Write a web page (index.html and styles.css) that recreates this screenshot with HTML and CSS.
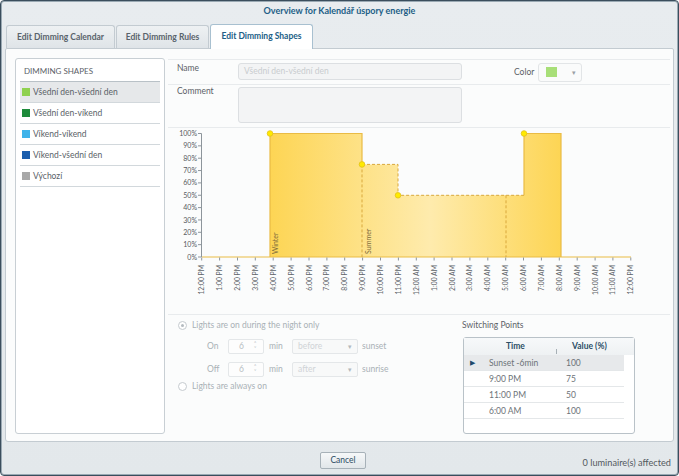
FILE: index.html
```html
<!DOCTYPE html>
<html>
<head>
<meta charset="utf-8">
<link rel="stylesheet" href="styles.css">
</head>
<body>
<div class="window">
  <div class="title">Overview for Kalendář úspory energie</div>
  <div class="tabs">
    <div class="tab t1">Edit Dimming Calendar</div>
    <div class="tab t2">Edit Dimming Rules</div>
    <div class="tab t3 active">Edit Dimming Shapes</div>
  </div>
  <div class="panel">
    <div class="list">
      <div class="list-head">DIMMING SHAPES</div>
      <div class="item selected"><span class="sq c1"></span>Všední den-všední den</div>
      <div class="item"><span class="sq c2"></span>Všední den-víkend</div>
      <div class="item"><span class="sq c3"></span>Víkend-víkend</div>
      <div class="item"><span class="sq c4"></span>Víkend-všední den</div>
      <div class="item"><span class="sq c5"></span>Výchozí</div>
    </div>
    <div class="main">
      <div class="row-name">
        <div class="lbl name-lbl">Name</div>
        <div class="input">Všední den-všední den</div>
        <div class="color-lbl">Color</div>
        <div class="color-dd"><span class="swatch"></span><span class="caret">▾</span></div>
      </div>
      <div class="row-comment">
        <div class="lbl comment-lbl">Comment</div>
        <div class="textarea"></div>
      </div>
      <div class="chart">
        <svg width="502" height="186" viewBox="168 126 502 186" xmlns="http://www.w3.org/2000/svg">
          <defs>
            <linearGradient id="fillg" gradientUnits="userSpaceOnUse" x1="270" y1="0" x2="561" y2="0">
              <stop offset="0" stop-color="#fdd554"/>
              <stop offset="0.55" stop-color="#feebad"/>
              <stop offset="1" stop-color="#fdd554"/>
            </linearGradient>
          </defs>
          <g class="ylabels">
            <text x="197" y="134">100%</text>
            <text x="197" y="146.3">90%</text>
            <text x="197" y="158.7">80%</text>
            <text x="197" y="171">70%</text>
            <text x="197" y="183.4">60%</text>
            <text x="197" y="195.8">50%</text>
            <text x="197" y="208.1">40%</text>
            <text x="197" y="220.5">30%</text>
            <text x="197" y="232.8">20%</text>
            <text x="197" y="245.2">10%</text>
            <text x="197" y="257.5">0%</text>
          </g>
          <g class="axis">
            <line x1="201.5" y1="131.5" x2="201.5" y2="255"/>
            <path d="M198 131.5h3.5M198 143.85h3.5M198 156.2h3.5M198 168.55h3.5M198 180.9h3.5M198 193.25h3.5M198 205.6h3.5M198 217.95h3.5M198 230.3h3.5M198 242.65h3.5M198 255h3.5"/>
          </g>
          <path class="area" d="M202 255H270V131.5H362V162.4H398V193.3H524V131.5H561V255Z"/>
          <path class="solid" d="M202 255H631M270 255V131.5H362V162.4M524 193.3V131.5H561V255"/>
          <path class="dash" d="M362 162.4H398V193.3H524M362 162.4V255M506 193.3V255"/>
          <text class="season" transform="translate(277.5,252) rotate(-90)">Winter</text>
          <text class="season" transform="translate(370.5,252) rotate(-90)">Summer</text>
          <g class="pts">
            <circle cx="270" cy="131.5" r="2.8"/>
            <circle cx="362" cy="162.4" r="2.8"/>
            <circle cx="398" cy="193.3" r="2.8"/>
            <circle cx="524" cy="131.5" r="2.8"/>
          </g>
          <g class="xticks">
            <path d="M201.7 255.5v3M219.6 255.5v3M237.5 255.5v3M255.3 255.5v3M273.2 255.5v3M291.1 255.5v3M309 255.5v3M326.9 255.5v3M344.7 255.5v3M362.6 255.5v3M380.5 255.5v3M398.4 255.5v3M416.3 255.5v3M434.1 255.5v3M452 255.5v3M469.9 255.5v3M487.8 255.5v3M505.7 255.5v3M523.5 255.5v3M541.4 255.5v3M559.3 255.5v3M577.2 255.5v3M595.1 255.5v3M612.9 255.5v3M630.8 255.5v3"/>
          </g>
          <g class="xlabels">
            <text transform="translate(204.2,263) rotate(-90)">12:00 PM</text>
            <text transform="translate(222.1,263) rotate(-90)">1:00 PM</text>
            <text transform="translate(240,263) rotate(-90)">2:00 PM</text>
            <text transform="translate(257.8,263) rotate(-90)">3:00 PM</text>
            <text transform="translate(275.7,263) rotate(-90)">4:00 PM</text>
            <text transform="translate(293.6,263) rotate(-90)">5:00 PM</text>
            <text transform="translate(311.5,263) rotate(-90)">6:00 PM</text>
            <text transform="translate(329.4,263) rotate(-90)">7:00 PM</text>
            <text transform="translate(347.2,263) rotate(-90)">8:00 PM</text>
            <text transform="translate(365.1,263) rotate(-90)">9:00 PM</text>
            <text transform="translate(383,263) rotate(-90)">10:00 PM</text>
            <text transform="translate(400.9,263) rotate(-90)">11:00 PM</text>
            <text transform="translate(418.8,263) rotate(-90)">12:00 AM</text>
            <text transform="translate(436.6,263) rotate(-90)">1:00 AM</text>
            <text transform="translate(454.5,263) rotate(-90)">2:00 AM</text>
            <text transform="translate(472.4,263) rotate(-90)">3:00 AM</text>
            <text transform="translate(490.3,263) rotate(-90)">4:00 AM</text>
            <text transform="translate(508.2,263) rotate(-90)">5:00 AM</text>
            <text transform="translate(526,263) rotate(-90)">6:00 AM</text>
            <text transform="translate(543.9,263) rotate(-90)">7:00 AM</text>
            <text transform="translate(561.8,263) rotate(-90)">8:00 AM</text>
            <text transform="translate(579.7,263) rotate(-90)">9:00 AM</text>
            <text transform="translate(597.6,263) rotate(-90)">10:00 AM</text>
            <text transform="translate(615.4,263) rotate(-90)">11:00 AM</text>
            <text transform="translate(633.3,263) rotate(-90)">12:00 PM</text>
          </g>
        </svg>
      </div>
      <div class="bottom">
        <div class="form">
          <div class="radio-row"><span class="radio on"></span>Lights are on during the night only</div>
          <div class="time-row r-on">
            <span class="tl">On</span>
            <span class="spin"><span class="sv">6</span><span class="arrows"><i>˄</i><i>˅</i></span></span>
            <span class="mn">min</span>
            <span class="dd"><span>before</span><span class="ddc">▾</span></span>
            <span class="ev">sunset</span>
          </div>
          <div class="time-row r-off">
            <span class="tl">Off</span>
            <span class="spin"><span class="sv">6</span><span class="arrows"><i>˄</i><i>˅</i></span></span>
            <span class="mn">min</span>
            <span class="dd"><span>after</span><span class="ddc">▾</span></span>
            <span class="ev">sunrise</span>
          </div>
          <div class="radio-row r2"><span class="radio"></span>Lights are always on</div>
        </div>
        <div class="switching">
          <div class="sp-lbl">Switching Points</div>
          <div class="table">
            <div class="thead">
              <span class="th-time">Time</span>
              <span class="th-div"></span>
              <span class="th-val">Value (%)</span>
            </div>
            <div class="tr sel"><span class="rh">▶</span><span class="td-t">Sunset -6min</span><span class="td-v">100</span></div>
            <div class="tr"><span class="rh"></span><span class="td-t">9:00 PM</span><span class="td-v">75</span></div>
            <div class="tr"><span class="rh"></span><span class="td-t">11:00 PM</span><span class="td-v">50</span></div>
            <div class="tr"><span class="rh"></span><span class="td-t">6:00 AM</span><span class="td-v">100</span></div>
          </div>
        </div>
      </div>
    </div>
  </div>
  <div class="footer">
    <div class="btn">Cancel</div>
    <div class="status">0 luminaire(s) affected</div>
  </div>
</div>
</body>
</html>
```

FILE: styles.css
```css
* { box-sizing: border-box; }
html, body { margin: 0; padding: 0; }
body {
  width: 679px;
  height: 476px;
  font-family: "Lato", "Open Sans", sans-serif;
  font-size: 8.5px;
  color: #4f565c;
  overflow: hidden;
}
.window {
  width: 679px;
  height: 476px;
  border: 1px solid #3b4e5d;
  border-radius: 4px;
  background: linear-gradient(#e8ecef, #e3e8eb);
  box-shadow: inset 0 0 0 1px #9aa9b3;
  display: flex;
  flex-direction: column;
}
.title {
  height: 23px;
  line-height: 19px;
  text-align: center;
  font-weight: bold;
  font-size: 9px;
  color: #215e86;
}
.tabs {
  display: flex;
  align-items: flex-end;
  margin-left: 5px;
  height: 24px;
  gap: 1px;
  position: relative;
  z-index: 1;
}
.tab {
  height: 23px;
  line-height: 22px;
  padding: 0;
  font-weight: bold;
  font-size: 8.5px;
  white-space: nowrap;
  color: #59636b;
  background: linear-gradient(#eef1f3, #dfe4e8);
  border: 1px solid #c3cbd1;
  border-bottom: none;
  border-radius: 3px 3px 0 0;
  text-align: center;
}
.t1 { width: 109px; }
.t2 { width: 93px; }
.t3 { width: 103px; }
.tab.active {
  background: #fff;
  color: #215e86;
  border-color: #a8c0d0;
  line-height: 23px;
  margin-bottom: -1px;
  height: 25px;
}
.panel {
  margin: 0 4px 0 4px;
  height: 394px;
  border: 1px solid #c3cbd1;
  border-radius: 2px 2px 3px 3px;
  background: #fbfcfc;
  display: flex;
  padding: 9px 3px 0 9px;
}
.list {
  width: 150px;
  height: 376px;
  border: 1px solid #c8cfd4;
  border-radius: 3px;
  background: #fff;
  padding: 0 4px;
}
.list-head {
  height: 23px;
  line-height: 24px;
  padding-left: 4px;
  font-size: 8px;
  color: #5b6167;
  border-bottom: 1px solid #b9c1c7;
}
.item {
  height: 21px;
  line-height: 20px;
  border-bottom: 1px solid #d2d8dc;
  display: flex;
  align-items: center;
  padding-left: 2px;
  color: #5a6167;
}
.item.selected { background: #e6e8ea; }
.sq {
  width: 8px;
  height: 8px;
  margin-right: 3px;
  flex: none;
}
.c1 { background: #8fd14f; }
.c2 { background: #1e8b3b; }
.c3 { background: #3fb3ea; }
.c4 { background: #1b5ead; }
.c5 { background: #a8a8a8; }

.main {
  flex: 1;
  margin-left: 3px;
  margin-top: 1px;
  border-top: 1px solid #e8ebed;
  display: flex;
  flex-direction: column;
}
.row-name {
  height: 25px;
  border-bottom: 1px solid #e8ebed;
  display: flex;
  align-items: center;
}
.lbl { color: #5b6167; }
.name-lbl {
  width: 70px;
  padding-left: 9px;
  align-self: flex-start;
  padding-top: 3px;
}
.input {
  width: 224px;
  height: 17px;
  margin-top: -1px;
  border: 1px solid #dcdfe2;
  border-radius: 3px;
  background: #f3f4f5;
  color: #c9cccf;
  padding-left: 5px;
  line-height: 15px;
}
.color-lbl {
  margin-left: 52px;
  width: 24px;
  color: #5b6167;
}
.color-dd {
  width: 44px;
  height: 19px;
  border: 1px solid #e2e5e7;
  border-radius: 3px;
  background: #fafbfb;
  display: flex;
  align-items: center;
  padding-left: 7px;
}
.swatch {
  width: 11px;
  height: 10px;
  background: #a8df78;
}
.caret {
  margin-left: 15px;
  font-size: 7px;
  color: #9aa1a6;
}
.row-comment {
  height: 43px;
  border-bottom: 1px solid #e8ebed;
  display: flex;
}
.comment-lbl {
  width: 70px;
  padding-left: 9px;
  padding-top: 1px;
}
.textarea {
  margin-top: 2px;
  width: 224px;
  height: 36px;
  border: 1px solid #dcdfe2;
  border-radius: 3px;
  background: #f3f4f5;
}
.chart {
  height: 187px;
  border-bottom: 1px solid #e8ebed;
}
.chart svg { display: block; }
.ylabels text {
  font-family: "Lato", sans-serif;
  font-size: 7px;
  fill: #555b60;
  text-anchor: end;
}
.axis line, .axis path, .xticks path {
  stroke: #8d959b;
  stroke-width: 1;
  fill: none;
}
.area { fill: url(#fillg); }
.solid {
  fill: none;
  stroke: #e9bb45;
  stroke-width: 1.2;
}
.dash {
  fill: none;
  stroke: #d9a83c;
  stroke-width: 1;
  stroke-dasharray: 3 2;
}
.season {
  font-family: "Lato", sans-serif;
  font-size: 7px;
  fill: #7d6b3c;
}
.pts circle {
  fill: #ffea00;
  stroke: #e2c11a;
  stroke-width: 0.8;
}
.xlabels text {
  font-family: "Lato", sans-serif;
  font-size: 6.8px;
  fill: #5d6368;
  text-anchor: end;
}

.bottom {
  flex: 1;
  display: flex;
}
.form {
  width: 294px;
  padding-left: 9px;
  padding-top: 4px;
  color: #a9b1b6;
}
.radio-row {
  height: 12px;
  display: flex;
  align-items: center;
}
.radio {
  width: 9px;
  height: 9px;
  border: 1px solid #c5cbcf;
  border-radius: 50%;
  margin-left: 1px;
  margin-right: 5px;
  position: relative;
  background: #fff;
}
.radio.on::after {
  content: "";
  position: absolute;
  left: 2px;
  top: 2px;
  width: 3px;
  height: 3px;
  border-radius: 50%;
  background: #b4bbc0;
}
.time-row {
  height: 16px;
  display: flex;
  align-items: center;
  margin-top: 7px;
}
.tl {
  width: 51px;
  padding-left: 30px;
}
.spin {
  width: 36px;
  height: 15px;
  border: 1px solid #e4e7e9;
  border-radius: 2px;
  background: #fdfdfd;
  display: flex;
  align-items: center;
}
.sv {
  width: 25px;
  text-align: center;
  color: #b9bfc3;
}
.arrows {
  display: flex;
  flex-direction: column;
  font-size: 5px;
  line-height: 5px;
  color: #b9bfc3;
}
.arrows i { font-style: normal; }
.mn {
  width: 23px;
  margin-left: 5px;
}
.dd {
  width: 66px;
  height: 15px;
  border: 1px solid #e4e7e9;
  border-radius: 2px;
  background: #f8f9f9;
  display: flex;
  align-items: center;
  justify-content: space-between;
  padding: 0 5px;
  color: #d0d4d7;
}
.ddc { font-size: 7px; color: #b3b9bd; }
.ev { margin-left: 4px; }
.r2 { margin-top: 3px; }

.switching {
  padding-top: 4px;
}
.sp-lbl {
  height: 12px;
  line-height: 12px;
  color: #5b6167;
}
.table {
  margin-top: 6px;
  margin-left: 1px;
  width: 172px;
  height: 97px;
  border: 1px solid #b9c2c8;
  border-radius: 3px;
  background: #fff;
  padding-right: 10px;
}
.thead {
  height: 17px;
  font-weight: bold;
  color: #2c4e66;
  background: linear-gradient(#f7f9fa, #eef1f3);
  position: relative;
  margin-right: -10px;
  line-height: 17px;
}
.th-time { position: absolute; left: 42px; }
.th-div {
  position: absolute;
  left: 92px;
  top: 11px;
  width: 1px;
  height: 5px;
  background: #a7b0b6;
}
.th-val { position: absolute; left: 108px; }
.tr {
  height: 16px;
  display: flex;
  align-items: center;
  border-bottom: 1px solid #e4e7e9;
  color: #6c7378;
}
.tr.sel { background: #e7e9eb; }
.rh {
  width: 25px;
  padding-left: 6px;
  font-size: 7px;
  color: #1e4a6b;
}
.td-t { width: 77px; }
.td-v { width: 50px; }

.footer {
  flex: 1;
  position: relative;
  display: flex;
  align-items: center;
  justify-content: center;
}
.btn {
  width: 46px;
  height: 17px;
  border: 1px solid #a7b1b8;
  border-radius: 2px;
  background: linear-gradient(#f6f8f9, #e1e6e9);
  text-align: center;
  line-height: 15px;
  color: #2b4b62;
  margin-top: 3px;
  margin-left: 7px;
}
.status {
  position: absolute;
  right: 7px;
  top: 15px;
  font-size: 9.2px;
  color: #53595e;
}
```
